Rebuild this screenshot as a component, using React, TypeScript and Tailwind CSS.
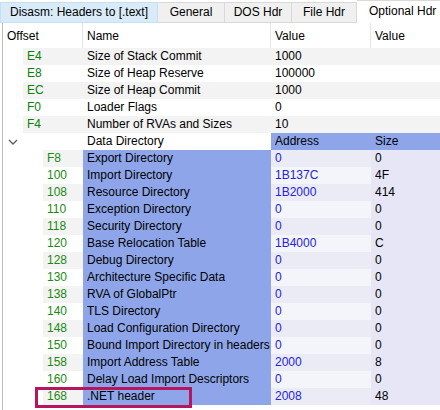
const topRows = [
  { off: "E4", name: "Size of Stack Commit", value: "1000" },
  { off: "E8", name: "Size of Heap Reserve", value: "100000" },
  { off: "EC", name: "Size of Heap Commit", value: "1000" },
  { off: "F0", name: "Loader Flags", value: "0" },
  { off: "F4", name: "Number of RVAs and Sizes", value: "10" },
];

const dirRows = [
  { off: "F8", name: "Export Directory", addr: "0", size: "0" },
  { off: "100", name: "Import Directory", addr: "1B137C", size: "4F" },
  { off: "108", name: "Resource Directory", addr: "1B2000", size: "414" },
  { off: "110", name: "Exception Directory", addr: "0", size: "0" },
  { off: "118", name: "Security Directory", addr: "0", size: "0" },
  { off: "120", name: "Base Relocation Table", addr: "1B4000", size: "C" },
  { off: "128", name: "Debug Directory", addr: "0", size: "0" },
  { off: "130", name: "Architecture Specific Data", addr: "0", size: "0" },
  { off: "138", name: "RVA of GlobalPtr", addr: "0", size: "0" },
  { off: "140", name: "TLS Directory", addr: "0", size: "0" },
  { off: "148", name: "Load Configuration Directory", addr: "0", size: "0" },
  { off: "150", name: "Bound Import Directory in headers", addr: "0", size: "0" },
  { off: "158", name: "Import Address Table", addr: "2000", size: "8" },
  { off: "160", name: "Delay Load Import Descriptors", addr: "0", size: "0" },
  { off: "168", name: ".NET header", addr: "2008", size: "48" },
];

const tabs = [
  { label: "Disasm: Headers to [.text]", w: "w-[158px]", bg: "bg-[#d9ebf9] border-[#c7dff2]" },
  { label: "General", w: "w-[67px]", bg: "bg-[#f0f0f0] border-[#d9d9d9]" },
  { label: "DOS Hdr", w: "w-[67px]", bg: "bg-[#f0f0f0] border-[#d9d9d9]" },
  { label: "File Hdr", w: "w-[65px]", bg: "bg-[#f0f0f0] border-[#d9d9d9]" },
];

export default function App() {
  return (
    <div
      className="relative w-[440px] h-[410px] overflow-hidden bg-white text-[12px] leading-[17px] text-black"
      style={{ fontFamily: '"Liberation Sans", Arial, sans-serif' }}
    >
      {/* Tabs */}
      <div className="flex h-[23px] items-end border-b border-[#d9d9d9]">
        {tabs.map((t) => (
          <div
            key={t.label}
            className={`${t.w} ${t.bg} h-[21px] -mb-px border border-l-0 first:border-l flex items-center justify-center whitespace-nowrap`}
          >
            {t.label}
          </div>
        ))}
        <div className="flex-1 h-[23px] -mb-px bg-white border-t border-[#d9d9d9] flex items-center pl-[12px] pb-[2px] whitespace-nowrap">
          Optional Hdr
        </div>
      </div>

      {/* Table */}
      <div className="ml-[2px] border-l border-[#bcbcbc] h-full">
        {/* Header */}
        <div className="flex h-[25px] items-center">
          <div className="w-[80px] h-full pl-[4px] pt-[2px] flex items-center border-r border-[#e5e5e5]">Offset</div>
          <div className="w-[188px] h-full pl-[4px] pt-[2px] flex items-center border-r border-[#e5e5e5]">Name</div>
          <div className="w-[100px] h-full pl-[4px] pt-[2px] flex items-center border-r border-[#e5e5e5]">Value</div>
          <div className="flex-1 h-full pl-[4px] pt-[2px] flex items-center">Value</div>
        </div>

        {topRows.map((r, i) => (
          <div key={r.off} className="flex h-[17px]">
            <div className="w-[20px]" />
            <div className={`flex flex-1 ${i % 2 === 0 ? "bg-[#f3f3f3]" : "bg-white"}`}>
              <div className="w-[60px] pl-[4px] text-[#0a800a]">{r.off}</div>
              <div className="w-[188px] pl-[4px] whitespace-nowrap">{r.name}</div>
              <div className="w-[100px] pl-[4px]">{r.value}</div>
              <div className="flex-1" />
            </div>
          </div>
        ))}

        {/* Data Directory group */}
        <div className="flex h-[17px]">
          <div className="w-[80px] flex items-center pl-[5px]">
            <svg width="10" height="6" viewBox="0 0 10 6" fill="none">
              <polyline points="1,1 5,5 9,1" stroke="#5f5f5f" strokeWidth="1.4" />
            </svg>
          </div>
          <div className="w-[188px] pl-[4px]">Data Directory</div>
          <div className="w-[100px] pl-[4px] bg-[#8ea6e9]">Address</div>
          <div className="flex-1 pl-[4px] bg-[#8ea6e9]">Size</div>
        </div>

        {dirRows.map((r, i) => (
          <div key={r.off} className="flex h-[17px]">
            <div className="w-[40px]" />
            <div className={`w-[40px] pl-[4px] text-[#1a8a10] ${i % 2 === 0 ? "bg-[#f3f3f3]" : "bg-white"}`}>
              {r.off}
            </div>
            <div className="w-[188px] pl-[4px] bg-[#8ea6e9] whitespace-nowrap overflow-hidden">{r.name}</div>
            <div className={`w-[100px] pl-[4px] text-[#2222e6] ${i % 2 === 0 ? "bg-[#ebebf5]" : "bg-[#f4f4fb]"}`}>
              {r.addr}
            </div>
            <div className="flex-1 pl-[4px] bg-[#e6e6f6]">{r.size}</div>
          </div>
        ))}
      </div>

      {/* Highlight around .NET header row */}
      <div className="absolute left-[35px] top-[387px] w-[157px] h-[21px] border-[3px] border-[#b5175e]" />
    </div>
  );
}
